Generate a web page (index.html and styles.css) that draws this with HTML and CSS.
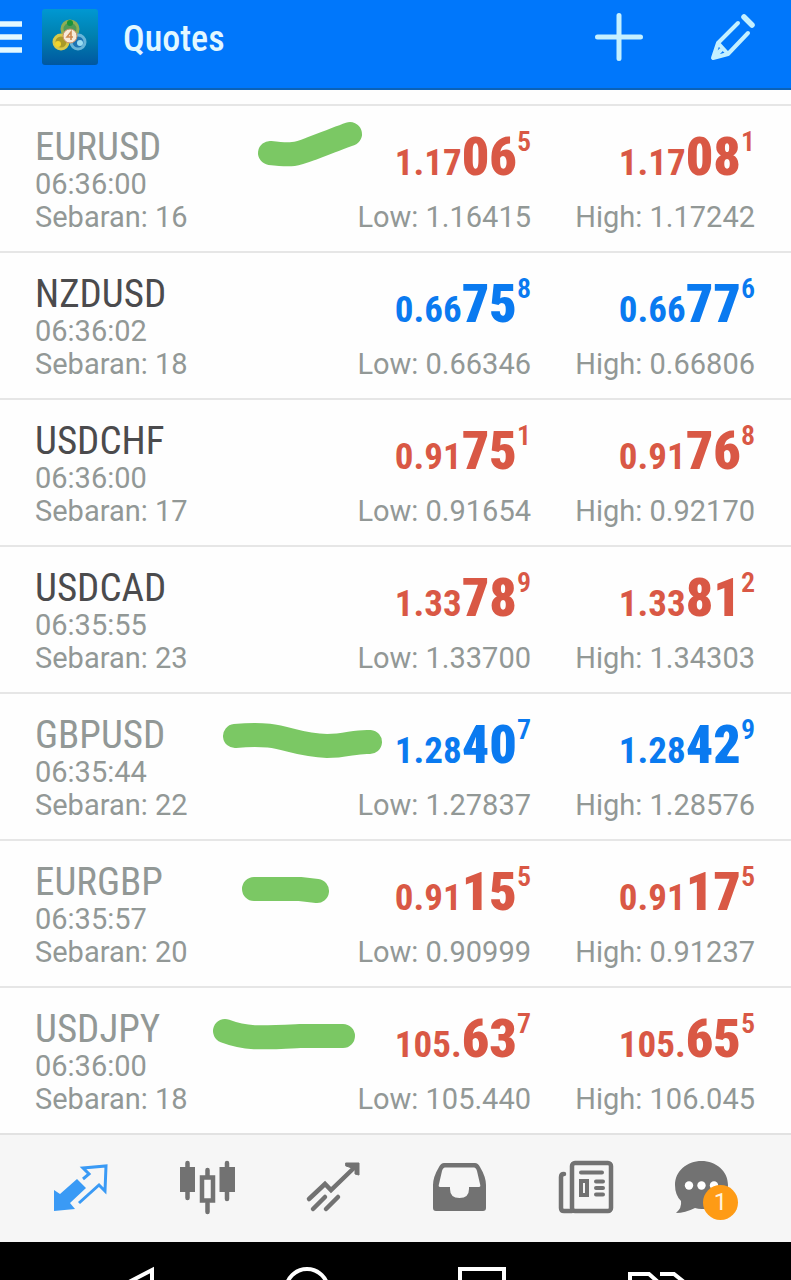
FILE: index.html
```html
<!DOCTYPE html>
<html lang="en">
<head>
<meta charset="utf-8">
<meta name="viewport" content="width=device-width, initial-scale=1">
<title>Quotes</title>
<link rel="stylesheet" href="styles.css">
</head>
<body>
<header class="topbar">
  <button class="icon-button" aria-label="Menu">
    <svg class="menu-icon" viewBox="0 0 22 32"><path d="M0 3H22M0 16H22M0 29H22" stroke="#e2f8ff" stroke-width="5.500"/></svg>
  </button>
  <svg class="logo" viewBox="0 0 56 56" aria-hidden="true">
    <defs>
      <linearGradient id="sea" x1="0" y1="0" x2="0" y2="1"><stop offset="0" stop-color="#0098d2"/><stop offset=".5" stop-color="#007fae"/><stop offset="1" stop-color="#0057a0"/></linearGradient>
    </defs>
    <rect width="56" height="56" rx="3" fill="url(#sea)"/>
    <circle cx="28" cy="20" r="8" fill="#4f9a58" stroke="#8fae55" stroke-width="3"/>
    <circle cx="19" cy="33" r="7" fill="#a99a28" stroke="#d8c94a" stroke-width="3"/>
    <circle cx="36" cy="33" r="7" fill="#1c74b4" stroke="#68b5d8" stroke-width="3"/>
    <circle cx="28" cy="14" r="3" fill="#18933a"/>
    <circle cx="16" cy="35" r="3" fill="#f0d52c"/>
    <circle cx="38" cy="34" r="3" fill="#9adcf2"/>
    <circle cx="28" cy="27" r="7" fill="#f7ead9" stroke="#c98d62" stroke-width="1"/>
    <path d="M29 31V23L25 28H31" fill="none" stroke="#cf8a51" stroke-width="1.6"/>
  </svg>
  <h1 class="title">Quotes</h1>
  <button class="icon-button add" aria-label="Add symbol">
    <svg class="action-icon" viewBox="0 0 48 48"><path d="M24 2.500V45.500M2.500 24H45.500" stroke="#c4f0ff" stroke-width="5" stroke-linecap="round"/></svg>
  </button>
  <button class="icon-button" aria-label="Edit list">
    <svg class="action-icon" viewBox="0 0 48 48" fill="none" stroke="#c4f0ff" stroke-width="4" stroke-linecap="round" stroke-linejoin="round"><path d="M29 10L9 30L4 45L19 41L39 20M9 30L19 41M12 37L8 41"/><path d="M35 4L43 12" stroke-width="5.500"/></svg>
  </button>
</header>

<main>
<ul class="quotes">
  <li class="quote down">
    <div class="info"><h2 class="symbol muted">EURUSD</h2><p>06:36:00</p><p>Sebaran: 16</p></div>
    <div class="side"><p class="price">1.17<b>06</b><sup>5</sup></p><p>Low: 1.16415</p></div>
    <div class="side"><p class="price">1.17<b>08</b><sup>1</sup></p><p>High: 1.17242</p></div>
    <svg class="mark" viewBox="0 2 180 147" aria-hidden="true"><path d="M60 49C84 52 87 50 103 44C116 39 129 34 140 30"/></svg>
  </li>
  <li class="quote up">
    <div class="info"><h2 class="symbol">NZDUSD</h2><p>06:36:02</p><p>Sebaran: 18</p></div>
    <div class="side"><p class="price">0.66<b>75</b><sup>8</sup></p><p>Low: 0.66346</p></div>
    <div class="side"><p class="price">0.66<b>77</b><sup>6</sup></p><p>High: 0.66806</p></div>
  </li>
  <li class="quote down">
    <div class="info"><h2 class="symbol">USDCHF</h2><p>06:36:00</p><p>Sebaran: 17</p></div>
    <div class="side"><p class="price">0.91<b>75</b><sup>1</sup></p><p>Low: 0.91654</p></div>
    <div class="side"><p class="price">0.91<b>76</b><sup>8</sup></p><p>High: 0.92170</p></div>
  </li>
  <li class="quote down">
    <div class="info"><h2 class="symbol">USDCAD</h2><p>06:35:55</p><p>Sebaran: 23</p></div>
    <div class="side"><p class="price">1.33<b>78</b><sup>9</sup></p><p>Low: 1.33700</p></div>
    <div class="side"><p class="price">1.33<b>81</b><sup>2</sup></p><p>High: 1.34303</p></div>
  </li>
  <li class="quote up">
    <div class="info"><h2 class="symbol muted">GBPUSD</h2><p>06:35:44</p><p>Sebaran: 22</p></div>
    <div class="side"><p class="price">1.28<b>40</b><sup>7</sup></p><p>Low: 1.27837</p></div>
    <div class="side"><p class="price">1.28<b>42</b><sup>9</sup></p><p>High: 1.28576</p></div>
    <svg class="mark" viewBox="0 2 180 147" aria-hidden="true"><path d="M25 44C75 39 78 53 117 54C137 54 145 49 160 50"/></svg>
  </li>
  <li class="quote down">
    <div class="info"><h2 class="symbol muted">EURGBP</h2><p>06:35:57</p><p>Sebaran: 20</p></div>
    <div class="side"><p class="price">0.91<b>15</b><sup>5</sup></p><p>Low: 0.90999</p></div>
    <div class="side"><p class="price">0.91<b>17</b><sup>5</sup></p><p>High: 0.91237</p></div>
    <svg class="mark" viewBox="0 2 180 147" aria-hidden="true"><path d="M44 50H90L107 52"/></svg>
  </li>
  <li class="quote down">
    <div class="info"><h2 class="symbol muted">USDJPY</h2><p>06:36:00</p><p>Sebaran: 18</p></div>
    <div class="side"><p class="price">105.<b>63</b><sup>7</sup></p><p>Low: 105.440</p></div>
    <div class="side"><p class="price">105.<b>65</b><sup>5</sup></p><p>High: 106.045</p></div>
    <svg class="mark" viewBox="0 2 180 147" aria-hidden="true"><path d="M15 45C36 53 50 52 90 50H133"/></svg>
  </li>
</ul>
</main>

<nav class="tabs" aria-label="Sections">
  <button class="tab active" aria-label="Quotes">
    <svg class="tab-icon" viewBox="0 0 60 60"><path d="M3 33L9 37L26 22L35 31L19 46L24 52L3 54Z" fill="currentColor"/><path d="M32 22L38 17L32 11L55 9L54 34L48 28L28 46" fill="none" stroke="currentColor" stroke-width="3"/></svg>
  </button>
  <button class="tab" aria-label="Charts">
    <svg class="tab-icon" viewBox="0 0 60 60" fill="none" stroke="currentColor" stroke-width="4.500" stroke-linecap="round"><path d="M10.500 6V41M50 6V42M30.500 13V19M30.500 46V55"/><path d="M3 10H18V35H3ZM42.500 10H58V35H42.500Z" fill="currentColor" stroke="none"/><path d="M25 20.500H36V43.500H25Z" stroke-width="4.500"/></svg>
  </button>
  <button class="tab" aria-label="Trade">
    <svg class="tab-icon" viewBox="0 0 60 60" fill="none" stroke="currentColor" stroke-width="4.500" stroke-linecap="round"><path d="M6 42L22 27L28 33L53 9"/><path d="M10 52L22 40M23 52L35 40"/><path d="M43 6H56V18L52 17V12L43 9Z" fill="currentColor" stroke-width="1" stroke-linejoin="round"/></svg>
  </button>
  <button class="tab" aria-label="History">
    <svg class="tab-icon" viewBox="-2 0 60 60"><path fill="currentColor" fill-rule="evenodd" d="M14 6H45Q48 6 50 10Q56 20 56 28V51Q56 54 53 54H6Q3 54 3 51V28Q3 20 9 10Q11 6 14 6ZM15 10.500Q13 10.500 12 14L9 27Q8 30 10 30H20V32Q20 41 29.500 41Q39 41 39 32V30H49Q51 30 50 27L47 14Q46 10.500 44 10.500Z"/></svg>
  </button>
  <button class="tab" aria-label="News">
    <svg class="tab-icon" viewBox="-2 0 60 60" fill="none" stroke="currentColor" stroke-width="4.500" stroke-linecap="round"><rect x="16" y="6" width="39" height="48" rx="3"/><path d="M8 17Q5 17 5 20V51Q5 54 8 54H16"/><path d="M25 15.500H46M40 24.500H47M40 31H47M40 37.500H47" stroke-width="4"/><path d="M25 24H31V38H25Z" stroke-width="4"/></svg>
  </button>
  <button class="tab" aria-label="Messages, 1 new">
    <span class="tab-badged">
      <svg class="tab-icon" viewBox="0 0 60 60"><path fill="currentColor" d="M21.500 4C36 4 48 14 48 28S36 52 21.500 52Q18 52 15 51Q5 56 -4 56Q2 51 1 44Q-5 38 -5 28C-5 14 7 4 21.500 4Z"/><g fill="#fff"><circle cx="9" cy="28.500" r="4.200"/><circle cx="21.500" cy="28.500" r="4.200"/><circle cx="34" cy="28.500" r="4.200"/></g></svg>
      <span class="badge">1</span>
    </span>
  </button>
</nav>

<nav class="system" aria-label="System">
  <button class="key" aria-label="Back"><svg viewBox="0 0 60 38"><path d="M49 60V28L3 52"/></svg></button>
  <button class="key" aria-label="Home"><svg viewBox="1 0 60 38"><circle cx="30" cy="48" r="21"/></svg></button>
  <button class="key" aria-label="Recent apps"><svg viewBox="1 0 60 38"><rect x="8" y="27" width="44" height="44"/></svg></button>
  <button class="key" aria-label="Switch"><svg viewBox="1 0 60 38"><path d="M3 60V32H22L31 40M33 32H47L57 40"/></svg></button>
</nav>
</body>
</html>
```
FILE: styles.css
```css
* {
  box-sizing: border-box;
}

body {
  margin: 0;
  min-height: 100vh;
  display: flex;
  flex-direction: column;
  background: #fefefe;
  color: #929896;
  font: 29px/33px Roboto, "Liberation Sans", sans-serif;
}

h1, h2, p, ul {
  margin: 0;
  padding: 0;
}

button {
  margin: 0;
  padding: 0;
  border: 0;
  background: none;
  color: inherit;
  font: inherit;
}

svg {
  display: block;
}

.topbar {
  display: flex;
  align-items: center;
  height: 90px;
  padding: 0 34px 14px 0;
  background: #0077fb;
  border-bottom: 2px solid #0b62b8;
}

.menu-icon {
  width: 22px;
  height: 32px;
}

.logo {
  width: 56px;
  height: 56px;
  margin: 0 25px 0 20px;
}

.title {
  flex: 1;
  padding-top: 3px;
  color: #e2f8ff;
  font: 500 36px/46px "Roboto Condensed", "Liberation Sans Narrow", Roboto, sans-serif;
}

.add {
  margin-right: 66px;
}

.action-icon {
  width: 48px;
  height: 48px;
}

.quotes {
  list-style: none;
  padding-top: 14px;
}

.quote {
  position: relative;
  display: grid;
  grid-template-columns: 1fr 180px 180px;
  column-gap: 44px;
  padding: 18px 36px 17px 35px;
  border-top: 2px solid #e6e6e6;
}

.symbol {
  color: #4b4b4d;
  font: 400 39px/46px "Roboto Condensed", "Liberation Sans Narrow", Roboto, sans-serif;
  margin-bottom: -2px;
}

.symbol.muted {
  color: #929896;
}

.side {
  display: flex;
  flex-direction: column;
  justify-content: space-between;
  text-align: right;
  white-space: nowrap;
}

.price {
  font: 700 37px/66px "Roboto Condensed", "Liberation Sans Narrow", Roboto, sans-serif;
}

.price b {
  font-size: 54px;
}

.price sup {
  font-size: 28px;
  font-weight: 600;
  line-height: 0;
  vertical-align: 24px;
}

.down .price {
  color: #d95845;
}

.up .price {
  color: #0a7af0;
}

.mark {
  position: absolute;
  top: 0;
  left: 210px;
  width: 180px;
  height: 147px;
  fill: none;
  stroke: #7bc864;
  stroke-width: 24px;
  stroke-linecap: round;
  stroke-linejoin: round;
}

.tabs {
  display: grid;
  grid-template-columns: repeat(6, 1fr);
  height: 109px;
  padding: 0 18px 4px;
  background: #f6f6f6;
  border-top: 2px solid #e2e2e2;
  color: #727272;
}

.tab {
  display: flex;
  align-items: center;
  justify-content: center;
}

.tab.active {
  color: #3a9af5;
}

.tab-icon {
  width: 60px;
  height: 60px;
  overflow: visible;
}

.tab-badged {
  position: relative;
}

.badge {
  position: absolute;
  right: 2px;
  bottom: -3px;
  width: 35px;
  height: 35px;
  border-radius: 50%;
  background: #fe9b15;
  color: #fff3dc;
  font-size: 24px;
  line-height: 35px;
  text-align: center;
}

.system {
  flex: 1;
  display: grid;
  grid-template-columns: repeat(4, 1fr);
  min-height: 38px;
  padding: 0 45px;
  background: #000;
}

.key {
  display: flex;
  justify-content: center;
}

.key svg {
  width: 60px;
  height: 38px;
  fill: none;
  stroke: #fff;
  stroke-width: 4px;
}
```
